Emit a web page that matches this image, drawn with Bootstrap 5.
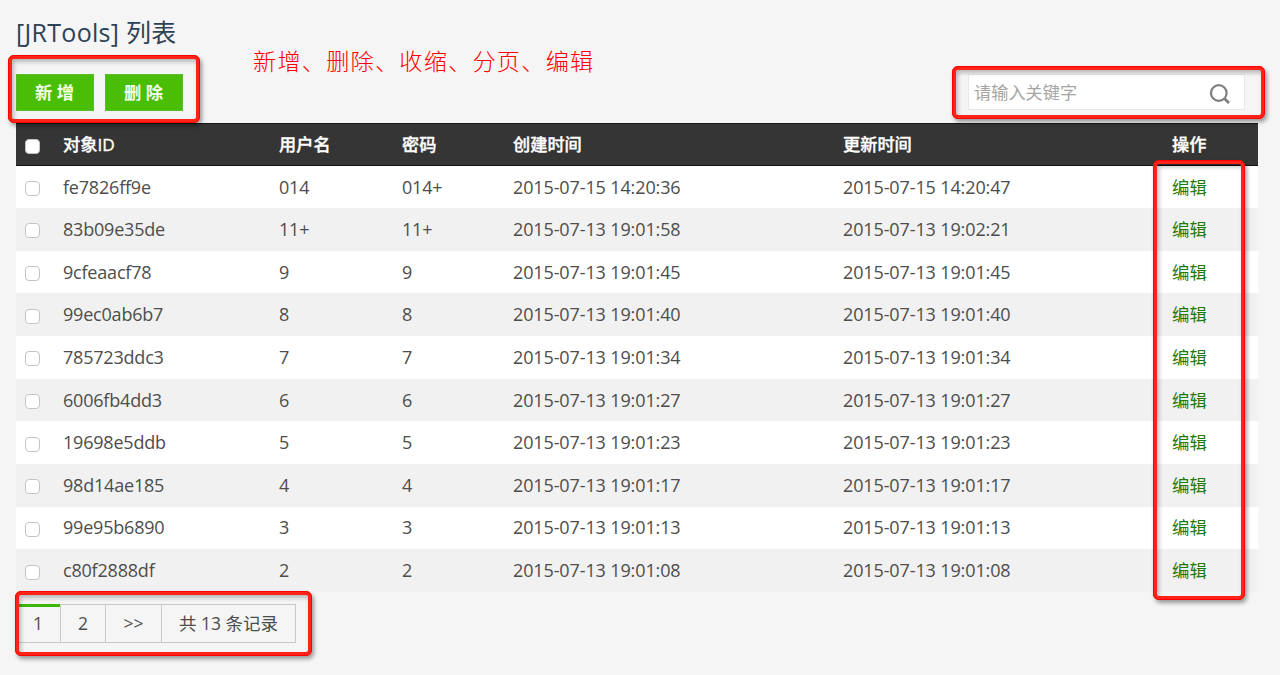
<!DOCTYPE html>
<html lang="zh-CN">
<head>
<meta charset="utf-8">
<meta name="viewport" content="width=device-width, initial-scale=1">
<title>[JRTools] 列表</title>
<link href="https://cdn.jsdelivr.net/npm/bootstrap@5.3.0/dist/css/bootstrap.min.css" rel="stylesheet">
<style>
  body { background: #f5f5f5; color: #4d4d4d; font: 17.3px/24px "Open Sans", "Noto Sans CJK SC", sans-serif; height: 675px; overflow: hidden; }
  .page { padding: 14px 22px 0 16px; }
  .page-title { font-size: 25px; line-height: 36px; font-weight: 400; color: #2d4257; letter-spacing: .3px; }
  .toolbar { height: 73px; padding-top: 24px; }
  .btn-tool { width: 78px; height: 37px; padding: 0 1px 0 0; border-radius: 0; background: #49be05; border: 1px solid #5bbb2e; color: #f4ffe9; font-size: 17.3px; font-weight: 700; }
  .btn-tool:hover { background: #3fa604; color: #fff; }
  .search { width: 277px; height: 36px; background: #fff; border: 1px solid #e8e8e8; margin-right: 13px; padding-right: 14px; }
  .search .form-control { background: none; border: 0; border-radius: 0; padding: 0 0 0 5px; font-size: 17.2px; line-height: 24px; height: 34px; box-shadow: none; }
  .search .form-control::placeholder { color: #a5a5a5; opacity: 1; }
  .search svg { margin-top: 3px; }
  .records { table-layout: fixed; width: 1242px; --bs-table-bg: transparent; }
  .records > :not(caption) > * > * { padding: 0 0 0 9px; border: 0; height: 42.65px; vertical-align: middle; color: #4d4d4d; box-shadow: none; }
  .records > tbody > tr > td { padding-bottom: 1px; font-size: 18px; letter-spacing: -.2px; }
  .records > thead > tr > th { background: #353535; color: #fff; font-size: 17.2px; font-weight: 500; -webkit-text-stroke: .35px #fff; height: 42px; border-top: 1px solid #181818; border-bottom: 1px solid #111; }
  .records > tbody > tr:nth-child(odd) { background: #fff; }
  .records > tbody > tr:nth-child(even) { background: #f1f1f1; }
  .records > tbody > tr > .stamp { letter-spacing: -.12px; }
  .records a { color: #1f7a0c; font-size: 17.4px; letter-spacing: 0; text-decoration: none; }
  .records .form-check-input { display: block; width: 15px; height: 15px; margin: 3px 0 0; border: 1px solid #c4c4c4; border-radius: 4px; background-color: #fff; }
  .records td .form-check-input { margin-top: 4px; }
  .pager { margin-top: 12px; --bs-pagination-bg: transparent; }
  .pager .page-link { height: 39px; padding: 0; border: 1px solid #c9c9c9; border-radius: 0 !important; color: #4d4d4d; font-size: 17.5px; line-height: 37px; text-align: center; }
  .pager .page-item.current .page-link { border-top: 3px solid #3cb80c; line-height: 32px; padding-right: 1px; }
  .note { position: absolute; left: 253px; top: 44px; font: 300 23.2px/32px "Noto Sans CJK SC", sans-serif; letter-spacing: 1.2px; color: #f00; white-space: nowrap; }
  .callout { position: absolute; border: 4px solid #ff2318; border-radius: 6px; box-shadow: 2px 3px 4px rgba(0,0,0,.38), inset 2px 3px 4px rgba(0,0,0,.25); outline: 1px solid #f00; outline-offset: -1px; pointer-events: none; }
  .callout-actions { left: 8px; top: 55px; width: 192px; height: 68px; }
  .callout-search { left: 952px; top: 66px; width: 313px; height: 53px; }
  .callout-edit { left: 1153px; top: 160px; width: 92px; height: 440px; }
  .callout-pager { left: 15px; top: 591px; width: 297px; height: 65px; }
</style>
</head>
<body class="position-relative">
<main class="page">
  <h1 class="page-title m-0">[JRTools] 列表</h1>
  <div class="toolbar d-flex justify-content-between">
    <div class="d-flex" style="gap:11px">
      <button type="button" class="btn btn-tool">新 增</button>
      <button type="button" class="btn btn-tool">删 除</button>
    </div>
    <form class="search d-flex align-items-center">
      <input class="form-control flex-grow-1" type="text" placeholder="请输入关键字" aria-label="请输入关键字">
      <svg class="flex-shrink-0" width="20" height="20" viewBox="0 0 20 20" fill="none" stroke="#808080" aria-hidden="true"><circle cx="8.8" cy="9" r="7.8" stroke-width="2.2"/><path d="M14.4 14.6 19 19.1" stroke-width="2.8"/></svg>
    </form>
  </div>
  <table class="table records m-0">
    <colgroup><col width="38"><col width="216"><col width="123"><col width="111"><col width="330"><col width="329"><col width="95"></colgroup>
    <thead>
      <tr><th><input class="form-check-input" type="checkbox" aria-label="全选"></th><th>对象ID</th><th>用户名</th><th>密码</th><th>创建时间</th><th>更新时间</th><th>操作</th></tr>
    </thead>
    <tbody>
      <tr><td><input class="form-check-input" type="checkbox"></td><td>fe7826ff9e</td><td>014</td><td>014+</td><td class="stamp">2015-07-15 14:20:36</td><td class="stamp">2015-07-15 14:20:47</td><td><a href="#">编辑</a></td></tr>
      <tr><td><input class="form-check-input" type="checkbox"></td><td>83b09e35de</td><td>11+</td><td>11+</td><td class="stamp">2015-07-13 19:01:58</td><td class="stamp">2015-07-13 19:02:21</td><td><a href="#">编辑</a></td></tr>
      <tr><td><input class="form-check-input" type="checkbox"></td><td>9cfeaacf78</td><td>9</td><td>9</td><td class="stamp">2015-07-13 19:01:45</td><td class="stamp">2015-07-13 19:01:45</td><td><a href="#">编辑</a></td></tr>
      <tr><td><input class="form-check-input" type="checkbox"></td><td>99ec0ab6b7</td><td>8</td><td>8</td><td class="stamp">2015-07-13 19:01:40</td><td class="stamp">2015-07-13 19:01:40</td><td><a href="#">编辑</a></td></tr>
      <tr><td><input class="form-check-input" type="checkbox"></td><td>785723ddc3</td><td>7</td><td>7</td><td class="stamp">2015-07-13 19:01:34</td><td class="stamp">2015-07-13 19:01:34</td><td><a href="#">编辑</a></td></tr>
      <tr><td><input class="form-check-input" type="checkbox"></td><td>6006fb4dd3</td><td>6</td><td>6</td><td class="stamp">2015-07-13 19:01:27</td><td class="stamp">2015-07-13 19:01:27</td><td><a href="#">编辑</a></td></tr>
      <tr><td><input class="form-check-input" type="checkbox"></td><td>19698e5ddb</td><td>5</td><td>5</td><td class="stamp">2015-07-13 19:01:23</td><td class="stamp">2015-07-13 19:01:23</td><td><a href="#">编辑</a></td></tr>
      <tr><td><input class="form-check-input" type="checkbox"></td><td>98d14ae185</td><td>4</td><td>4</td><td class="stamp">2015-07-13 19:01:17</td><td class="stamp">2015-07-13 19:01:17</td><td><a href="#">编辑</a></td></tr>
      <tr><td><input class="form-check-input" type="checkbox"></td><td>99e95b6890</td><td>3</td><td>3</td><td class="stamp">2015-07-13 19:01:13</td><td class="stamp">2015-07-13 19:01:13</td><td><a href="#">编辑</a></td></tr>
      <tr><td><input class="form-check-input" type="checkbox"></td><td>c80f2888df</td><td>2</td><td>2</td><td class="stamp">2015-07-13 19:01:08</td><td class="stamp">2015-07-13 19:01:08</td><td><a href="#">编辑</a></td></tr>
    </tbody>
  </table>
  <nav aria-label="分页">
    <ul class="pagination pager mb-0">
      <li class="page-item current"><a class="page-link" href="#" style="width:45px">1</a></li>
      <li class="page-item"><a class="page-link" href="#" style="width:46px">2</a></li>
      <li class="page-item"><a class="page-link" href="#" style="width:57px">&gt;&gt;</a></li>
      <li class="page-item"><a class="page-link" href="#" style="width:135px">共 13 条记录</a></li>
    </ul>
  </nav>
</main>
<div class="note">新增、删除、收缩、分页、编辑</div>
<div class="callout callout-actions"></div>
<div class="callout callout-search"></div>
<div class="callout callout-edit"></div>
<div class="callout callout-pager"></div>
<script src="https://cdn.jsdelivr.net/npm/bootstrap@5.3.0/dist/js/bootstrap.bundle.min.js"></script>
</body>
</html>
